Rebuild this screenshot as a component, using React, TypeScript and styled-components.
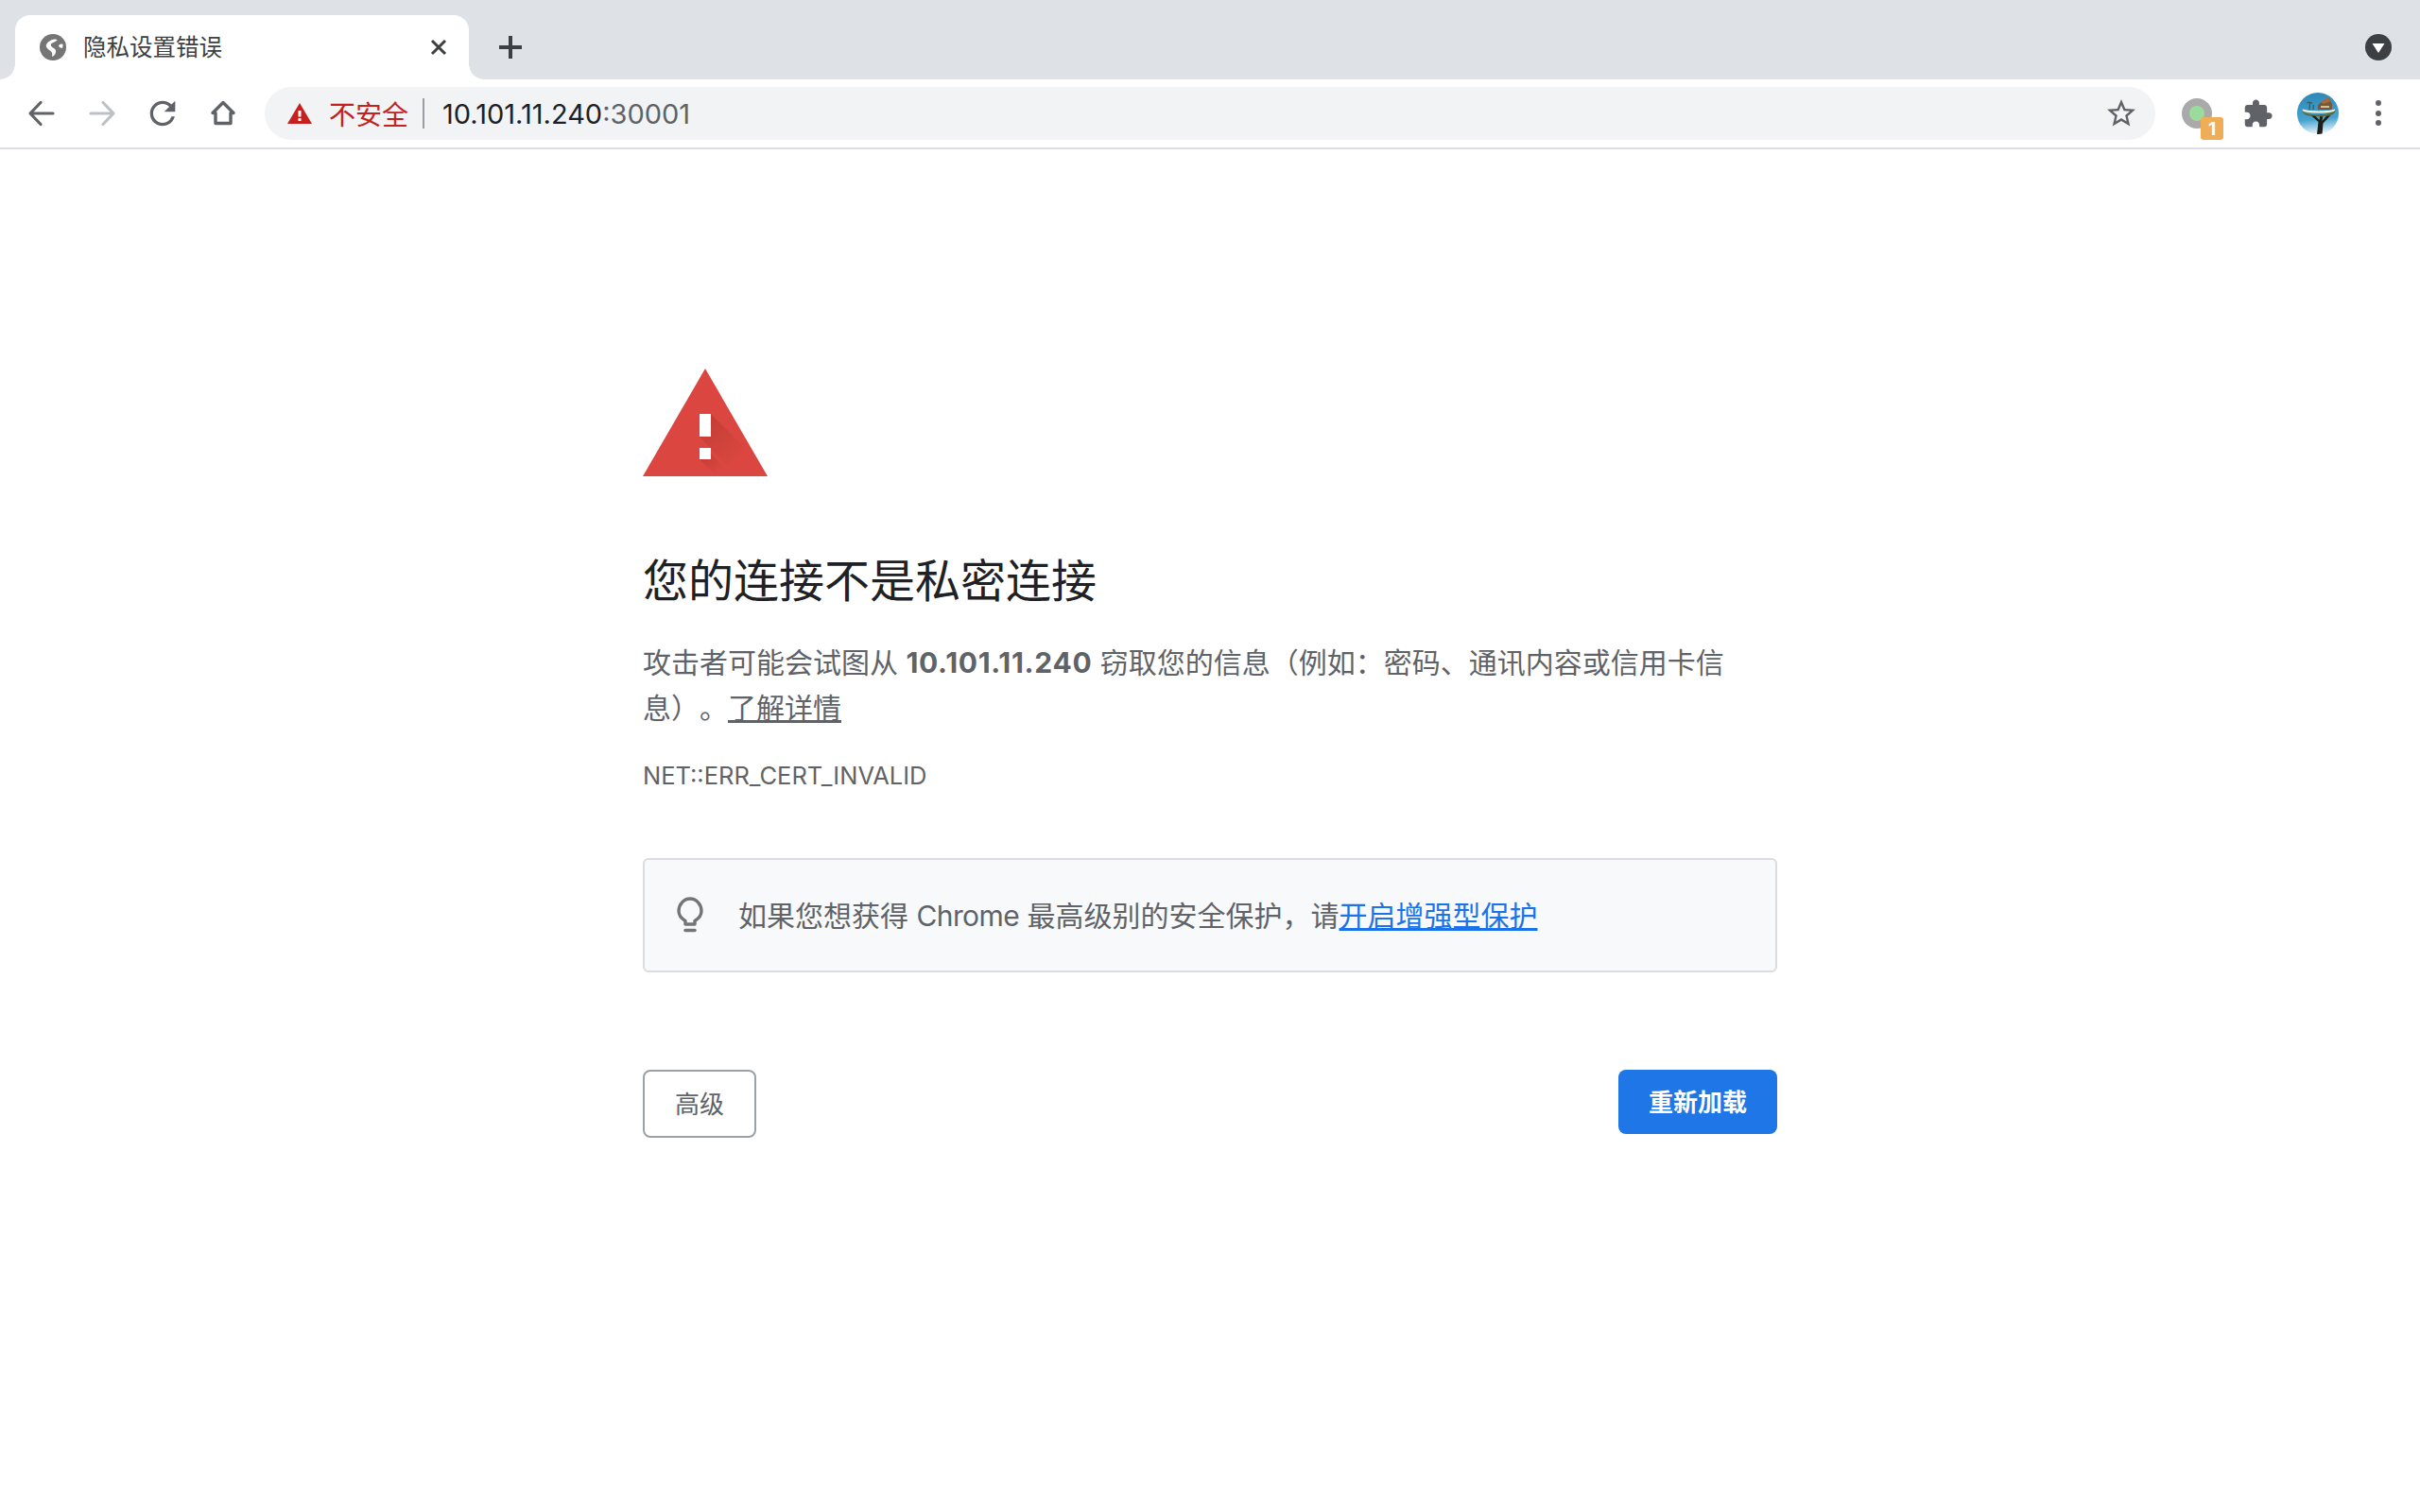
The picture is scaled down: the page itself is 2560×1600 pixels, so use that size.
import React, { FC } from "react";
import styled, { createGlobalStyle } from "styled-components";

const fontStack = `Inter, "Noto Sans CJK SC", sans-serif`;
const iconGray = "#5f6368";

const GlobalStyle = createGlobalStyle`
  html, body {
    margin: 0;
    padding: 0;
    background: #fff;
  }
  body {
    font-family: ${fontStack};
    text-spacing-trim: space-all;
  }
`;

const Shell = styled.div`
  min-height: 1600px;
  background: #fff;
`;

const TabStrip = styled.div`
  display: flex;
  height: 84px;
  box-sizing: border-box;
  padding: 16px 12px 0 16px;
  background: #dee1e6;
`;
const Tab = styled.div`
  position: relative;
  display: flex;
  align-items: center;
  width: 480px;
  height: 68px;
  box-sizing: border-box;
  padding: 0 20px 0 26px;
  background: #fff;
  border-radius: 16px 16px 0 0;
  &::before,
  &::after {
    content: "";
    position: absolute;
    bottom: 0;
    width: 16px;
    height: 16px;
  }
  &::before {
    left: -16px;
    background: radial-gradient(circle at 0 0, #dee1e6 15.5px, #fff 16px);
  }
  &::after {
    right: -16px;
    background: radial-gradient(circle at 100% 0, #dee1e6 15.5px, #fff 16px);
  }
`;
const TabTitle = styled.span`
  margin: 0 0 4px 18px;
  flex: 1;
  font-size: 24.5px;
  color: #3c4043;
`;
const StripButton = styled.div<{ $right?: boolean }>`
  display: flex;
  align-items: center;
  justify-content: center;
  width: 64px;
  height: 68px;
  margin-left: ${(p) => (p.$right ? "auto" : "12px")};
`;

const Toolbar = styled.div`
  display: flex;
  align-items: center;
  height: 74px;
  box-sizing: border-box;
  padding: 0 12px;
  border-bottom: 2px solid #dedee4;
  background: #fff;
`;
const ToolButton = styled.div`
  position: relative;
  display: flex;
  align-items: center;
  justify-content: center;
  flex: none;
  width: 64px;
  height: 56px;
`;
const Omnibox = styled.div`
  display: flex;
  align-items: center;
  flex: 1;
  height: 56px;
  margin: 0 12px;
  padding: 0 18px 0 24px;
  border-radius: 28px;
  background: #f1f3f4;
`;
const NotSecure = styled.span`
  margin-left: 18px;
  font-size: 28px;
  color: #c5221f;
`;
const Divider = styled.span`
  width: 2px;
  height: 32px;
  margin: 0 19px 0 15px;
  background: #9aa0a6;
`;
const Url = styled.span`
  flex: 1;
  font-size: 29px;
  color: #202124;
`;
const Port = styled.span`
  color: #5f6368;
`;
const ExtBadge = styled.span`
  position: absolute;
  left: 36px;
  top: 32px;
  width: 24px;
  height: 24px;
  border-radius: 3px;
  background: #f0ad57;
  color: #fff;
  font-size: 19px;
  font-weight: 700;
  line-height: 25px;
  text-align: center;
`;

const Main = styled.main`
  width: 1200px;
  margin: 0 auto;
  padding-top: 232px;
`;
const Title = styled.h1`
  margin: 77px 0 0;
  font-size: 48px;
  font-weight: 400;
  line-height: 68px;
  color: #202124;
`;
const Message = styled.p`
  margin: 28px 0 0;
  font-size: 30px;
  line-height: 48px;
  color: #5f6368;
`;
const Host = styled.b`
  letter-spacing: 0.7px;
`;
const Learn = styled.a`
  color: #5f6368;
  text-decoration: underline;
`;
const Code = styled.div`
  margin-top: 30px;
  font-size: 25.5px;
  line-height: 36px;
  color: #5f6368;
`;
const Callout = styled.div`
  display: flex;
  align-items: center;
  height: 121px;
  box-sizing: border-box;
  margin-top: 69px;
  padding-left: 34px;
  border: 2px solid #dadce0;
  border-radius: 6px;
  background: #f8f9fa;
  font-size: 30px;
  color: #5f6368;
`;
const CalloutText = styled.span`
  margin: 0 0 4px 37px;
`;
const Product = styled.span`
  letter-spacing: -0.6px;
`;
const BlueLink = styled.a`
  color: #1a73e8;
  text-decoration: underline;
`;
const Actions = styled.div`
  display: flex;
  justify-content: space-between;
  align-items: flex-start;
  margin-top: 103px;
`;
const Button = styled.button<{ $primary?: boolean }>`
  box-sizing: border-box;
  width: ${(p) => (p.$primary ? "168px" : "120px")};
  height: ${(p) => (p.$primary ? "68px" : "72px")};
  padding: 0 0 3px;
  border: ${(p) => (p.$primary ? "none" : "2px solid #9aa0a6")};
  border-radius: 8px;
  background: ${(p) => (p.$primary ? "#1f76e6" : "#fff")};
  color: ${(p) => (p.$primary ? "#fff" : "#5f6368")};
  font-family: ${fontStack};
  font-size: 26px;
  font-weight: ${(p) => (p.$primary ? 700 : 400)};
`;

const Globe: FC = () => (
  <svg width="28" height="28" viewBox="0 0 28 28">
    <circle cx="14" cy="14" r="14" fill="#757575" />
    <path
      d="M13 6c2.500-1 5-.5 5.500.5-2 2-5 2.500-6.500 4-1 1.500.5 3 3 4.500 2.500 1.500 2.500 4 1.500 6-.8 1.500-2.300 2.500-3.500 3 .3-2 .5-3.500-.5-5-1.500-2-4.500-3-5.500-5.500C6 10.500 9.500 7.500 13 6z"
      fill="#fff"
    />
    <path d="M21 11c1.200-.7 2.500-.8 3.500-.3.200 1.500 0 3-.5 4.300-1.300-.2-3-.5-3.700-1.700-.4-.8.200-1.800.7-2.300z" fill="#fff" />
  </svg>
);

const CloseIcon: FC = () => (
  <svg width="24" height="24" viewBox="0 0 24 24">
    <path d="M5 5l14 14M19 5L5 19" stroke="#3c4043" strokeWidth="3" fill="none" />
  </svg>
);

const PlusIcon: FC = () => (
  <svg width="24" height="24" viewBox="0 0 24 24">
    <path d="M12 0v24M0 12h24" stroke="#3c4043" strokeWidth="4" fill="none" />
  </svg>
);

const TabSearch: FC = () => (
  <svg width="28" height="28" viewBox="0 0 28 28">
    <circle cx="14" cy="14" r="14" fill="#3c4043" />
    <path d="M7.500 10h13L14 20z" fill="#fff" />
  </svg>
);

const Arrow: FC<{ color: string; flip?: boolean }> = ({ color, flip }) => (
  <svg width="32" height="32" viewBox="0 0 32 32">
    <path
      d="M28 16H4.500M15 4.500L4 16l11 11.500"
      transform={flip ? "matrix(-1 0 0 1 32 0)" : undefined}
      stroke={color}
      strokeWidth="3.200"
      strokeLinecap="round"
      strokeLinejoin="round"
      fill="none"
    />
  </svg>
);

const Reload: FC = () => (
  <svg width="40" height="40" viewBox="0 0 24 24">
    <path
      d="M17.650 6.350A7.958 7.958 0 0 0 12 4c-4.420 0-7.990 3.580-7.990 8s3.570 8 7.990 8c3.730 0 6.840-2.550 7.730-6h-2.080A5.990 5.990 0 0 1 12 18c-3.310 0-6-2.690-6-6s2.690-6 6-6c1.660 0 3.140.690 4.220 1.780L13 11h7V4l-2.350 2.350z"
      fill={iconGray}
    />
  </svg>
);

const Home: FC = () => (
  <svg width="32" height="32" viewBox="0 0 32 32">
    <path
      d="M16 4.500L27 15.500H24V26.500H8V15.500H5z"
      stroke={iconGray}
      strokeWidth="3.400"
      strokeLinejoin="round"
      fill="none"
    />
  </svg>
);

const WarnSmall: FC = () => (
  <svg width="26" height="22" viewBox="0 0 26 22">
    <path d="M13 0l13 22H0z" fill="#c5221f" />
    <path d="M11.500 8h3v6.500h-3zM11.500 16h3v3h-3z" fill="#fff" />
  </svg>
);

const Star: FC = () => (
  <svg width="36" height="36" viewBox="0 0 24 24">
    <path
      d="M22 9.240l-7.190-.620L12 2 9.190 8.630 2 9.240l5.460 4.730L5.820 21 12 17.270 18.180 21l-1.630-7.030L22 9.240zM12 15.400l-3.760 2.270 1-4.280-3.320-2.880 4.380-.380L12 6.100l1.710 4.040 4.380.380-3.320 2.880 1 4.280L12 15.400z"
      fill={iconGray}
    />
  </svg>
);

const ExtDot: FC = () => (
  <svg width="32" height="32" viewBox="0 0 32 32">
    <circle cx="16" cy="16" r="16" fill="#aaaaaa" />
    <circle cx="16" cy="16" r="8" fill="#9bdc9d" />
  </svg>
);

const Puzzle: FC = () => (
  <svg width="33" height="33" viewBox="0 0 24 24">
    <path
      d="M20.500 11H19V7c0-1.100-.9-2-2-2h-4V3.500C13 2.120 11.880 1 10.500 1S8 2.120 8 3.500V5H4c-1.100 0-1.990.9-1.990 2v3.800H3.500c1.490 0 2.700 1.210 2.700 2.700s-1.210 2.700-2.700 2.700H2V20c0 1.100.9 2 2 2h3.800v-1.500c0-1.490 1.210-2.700 2.700-2.700 1.490 0 2.700 1.210 2.700 2.700V22H17c1.100 0 2-.9 2-2v-4h1.500c1.380 0 2.500-1.120 2.500-2.500S21.880 11 20.500 11z"
      fill={iconGray}
    />
  </svg>
);

const Avatar: FC = () => (
  <svg width="44" height="44" viewBox="0 0 44 44">
    <defs>
      <linearGradient id="sky" x1="0.300" y1="0" x2="0.400" y2="1">
        <stop offset="0" stopColor="#2c87b6" />
        <stop offset="0.650" stopColor="#46a3d0" />
        <stop offset="1" stopColor="#eef6fa" />
      </linearGradient>
      <clipPath id="disc">
        <circle cx="22" cy="22" r="22" />
      </clipPath>
    </defs>
    <g clipPath="url(#disc)">
      <rect width="44" height="44" fill="url(#sky)" />
      <path d="M21 44l1.500-13-8-7h4l5 5 1-6h3l-1 7 5-6h4l-8 8.500-1 11.500z" fill="#1c1f1b" />
      <path d="M5 19c5 6 29 6 36-1-1 4-4 6-7 6.500-7 1-18 1-24-.5-3-1-4-3-5-5z" fill="#5e6a3a" />
      <path d="M6 17.500c7 2.500 27 2.500 34 0 .8 1-.2 2-1.500 2.500-8 2-24 2-31 0-1.500-.5-2.300-1.500-1.500-2.500z" fill="#f4efd9" />
      <path d="M22 18v-5l5-4 7-3 3 6v6z" fill="#77583c" />
      <path d="M25 10l7-5 4 4-8 3z" fill="#a9683b" />
      <path d="M25 14h9v2h-9z" fill="#d9bd92" />
      <path d="M13 18l.5-7M10.500 11c1.500-1 4-1 5.500.5M17 18l.3-5" stroke="#46574a" strokeWidth="1.300" fill="none" />
    </g>
  </svg>
);

const DangerIcon: FC = () => (
  <svg width="132" height="114" viewBox="0 0 132 114" style={{ display: "block" }}>
    <defs>
      <linearGradient id="shadeBar" gradientUnits="userSpaceOnUse" x1="62" y1="56" x2="104" y2="98">
        <stop offset="0" stopColor="#8f2a1e" stopOpacity="0.320" />
        <stop offset="1" stopColor="#8f2a1e" stopOpacity="0" />
      </linearGradient>
      <linearGradient id="shadeDot" gradientUnits="userSpaceOnUse" x1="62" y1="86" x2="84" y2="108">
        <stop offset="0" stopColor="#8f2a1e" stopOpacity="0.380" />
        <stop offset="1" stopColor="#8f2a1e" stopOpacity="0" />
      </linearGradient>
    </defs>
    <path d="M66 0l66 114H0z" fill="#db4740" />
    <path d="M72 48l40 40-24 14-28-30z" fill="url(#shadeBar)" />
    <path d="M60 96l18 18h18L72 90V84H60z" fill="url(#shadeDot)" />
    <path d="M60 48h12v24H60zM60 84h12v12H60z" fill="#fff" />
  </svg>
);

const Bulb: FC = () => (
  <svg width="28" height="40" viewBox="0 0 28 40">
    <path
      d="M9 29v-3.500C5 23 2 19.500 2 15 2 8 7.500 2 14 2s12 6 12 13c0 4.500-3 8-7 10.500V29z"
      stroke="#757575"
      strokeWidth="3.400"
      strokeLinejoin="round"
      fill="none"
    />
    <path d="M9 35.500h10" stroke="#757575" strokeWidth="3.500" strokeLinecap="round" />
  </svg>
);

const App: FC = () => (
  <Shell>
    <GlobalStyle />
    <TabStrip>
      <Tab>
        <Globe />
        <TabTitle>隐私设置错误</TabTitle>
        <CloseIcon />
      </Tab>
      <StripButton>
        <PlusIcon />
      </StripButton>
      <StripButton $right>
        <TabSearch />
      </StripButton>
    </TabStrip>
    <Toolbar>
      <ToolButton>
        <Arrow color={iconGray} />
      </ToolButton>
      <ToolButton>
        <Arrow color="#bdc1c6" flip />
      </ToolButton>
      <ToolButton>
        <Reload />
      </ToolButton>
      <ToolButton>
        <Home />
      </ToolButton>
      <Omnibox>
        <WarnSmall />
        <NotSecure>不安全</NotSecure>
        <Divider />
        <Url>
          10.101.11.240<Port>:30001</Port>
        </Url>
        <Star />
      </Omnibox>
      <ToolButton>
        <ExtDot />
        <ExtBadge>1</ExtBadge>
      </ToolButton>
      <ToolButton>
        <Puzzle />
      </ToolButton>
      <ToolButton>
        <Avatar />
      </ToolButton>
      <ToolButton>
        <svg width="8" height="32" viewBox="0 0 8 32">
          <circle cx="4" cy="5" r="3" fill={iconGray} />
          <circle cx="4" cy="16" r="3" fill={iconGray} />
          <circle cx="4" cy="26" r="3" fill={iconGray} />
        </svg>
      </ToolButton>
    </Toolbar>
    <Main>
      <DangerIcon />
      <Title>您的连接不是私密连接</Title>
      <Message>
        攻击者可能会试图从 <Host>10.101.11.240</Host> 窃取您的信息（例如：密码、通讯内容或信用卡信息）。
        <Learn>了解详情</Learn>
      </Message>
      <Code>NET::ERR_CERT_INVALID</Code>
      <Callout>
        <Bulb />
        <CalloutText>
          如果您想获得 <Product>Chrome</Product> 最高级别的安全保护，请<BlueLink>开启增强型保护</BlueLink>
        </CalloutText>
      </Callout>
      <Actions>
        <Button>高级</Button>
        <Button $primary>重新加载</Button>
      </Actions>
    </Main>
  </Shell>
);

export default App;
